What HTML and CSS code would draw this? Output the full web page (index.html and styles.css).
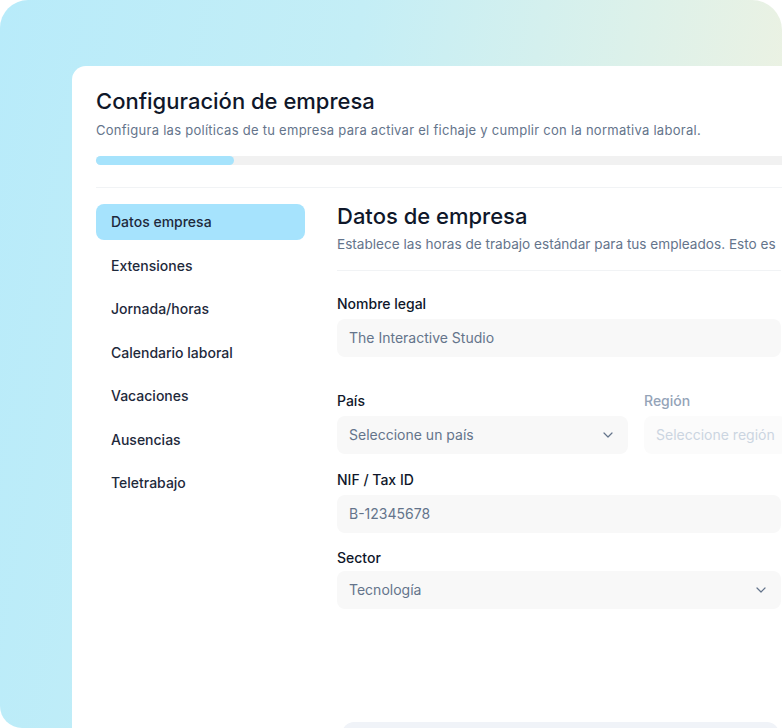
FILE: index.html
```html
<!DOCTYPE html>
<html lang="es">
<head>
  <meta charset="utf-8">
  <title>Configuración de empresa</title>
  <link rel="stylesheet" href="styles.css">
</head>
<body>
<div class="frame">
  <div class="card">
    <h1 class="title">Configuración de empresa</h1>
    <p class="lead">Configura las políticas de tu empresa para activar el fichaje y cumplir con la normativa laboral.</p>
    <div class="progress"><div class="progress-fill" style="width: 138px"></div></div>
    <hr class="rule">

    <div class="layout">
      <ul class="nav">
        <li class="nav-item active">Datos empresa</li>
        <li class="nav-item">Extensiones</li>
        <li class="nav-item">Jornada/horas</li>
        <li class="nav-item">Calendario laboral</li>
        <li class="nav-item">Vacaciones</li>
        <li class="nav-item">Ausencias</li>
        <li class="nav-item">Teletrabajo</li>
      </ul>

      <div class="content">
        <h2 class="section-title">Datos de empresa</h2>
        <p class="section-lead">Establece las horas de trabajo estándar para tus empleados. Esto es</p>
        <hr class="rule small">

        <div class="field">
          <label class="label">Nombre legal</label>
          <div class="input">The Interactive Studio</div>
        </div>

        <div class="row">
          <div class="field">
            <label class="label">País</label>
            <div class="input select">Seleccione un país
              <svg class="chev" width="10" height="6" viewBox="0 0 10 6"><path d="M1 1l4 4 4-4" fill="none" stroke="#64748b" stroke-width="1.2" stroke-linecap="round" stroke-linejoin="round"/></svg>
            </div>
          </div>
          <div class="field">
            <label class="label muted">Región</label>
            <div class="input disabled">Seleccione región</div>
          </div>
        </div>

        <div class="field">
          <label class="label">NIF / Tax ID</label>
          <div class="input">B-12345678</div>
        </div>

        <div class="field sector">
          <label class="label">Sector</label>
          <div class="input select">Tecnología
            <svg class="chev" width="10" height="6" viewBox="0 0 10 6"><path d="M1 1l4 4 4-4" fill="none" stroke="#64748b" stroke-width="1.2" stroke-linecap="round" stroke-linejoin="round"/></svg>
          </div>
        </div>

        <div class="footer-box"></div>
      </div>
    </div>
  </div>
</div>
</body>
</html>
```

FILE: styles.css
```css
html, body {
  margin: 0;
  padding: 0;
  background: #fff;
}
body {
  font-family: Inter, "Noto Sans", sans-serif;
  color: #0f172a;
}
.frame {
  width: 782px;
  height: 728px;
  overflow: hidden;
  border-radius: 28px 30px 0 22px;
  background: linear-gradient(100deg, #b8ebfa 0%, #c4eef6 40%, #dcf1ea 70%, #f5f2de 100%);
  padding: 66px 0 0 72px;
  box-sizing: border-box;
}
.card {
  width: 900px;
  min-height: 700px;
  background: #fff;
  border-radius: 14px 0 0 0;
  padding: 21px 24px 0 24px;
  box-sizing: border-box;
}
.title {
  font-size: 22px;
  line-height: 28px;
  font-weight: 500;
  margin: 0;
}
.lead {
  margin: 5px 0 0 0;
  font-size: 13px;
  line-height: 20px;
  letter-spacing: 0.27px;
  color: #64748b;
  white-space: nowrap;
}
.progress {
  margin-top: 16px;
  height: 9px;
  border-radius: 5px;
  background: #f1f1f1;
}
.progress-fill {
  height: 100%;
  border-radius: 5px;
  background: #a6e3fc;
}
.rule {
  border: 0;
  border-top: 1px solid #f1f3f5;
  margin: 22px 0 0 0;
}
.rule.small {
  margin-top: 16px;
}
.layout {
  display: flex;
  gap: 32px;
  margin-top: 16px;
}
.nav {
  list-style: none;
  margin: 0;
  padding: 0;
  width: 209px;
  flex-shrink: 0;
  display: flex;
  flex-direction: column;
  gap: 7.5px;
}
.nav-item {
  height: 36px;
  line-height: 35px;
  padding: 0 15px;
  font-size: 14px;
  font-weight: 500;
  color: #1e293b;
  border-radius: 8px;
}
.nav-item.active {
  background: #a6e3fd;
}
.content {
  width: 444px;
  flex-shrink: 0;
}
.section-title {
  margin: -1px 0 0 0;
  font-size: 22px;
  line-height: 26px;
  font-weight: 500;
}
.section-lead {
  margin: 5px 0 0 0;
  font-size: 13.6px;
  line-height: 20px;
  color: #64748b;
  white-space: nowrap;
}
.field {
  display: flex;
  flex-direction: column;
  margin-top: 16px;
}
.rule.small + .field {
  margin-top: 23px;
}
.field.sector {
  margin-top: 15px;
}
.field.sector .label {
  margin-bottom: 3px;
}
.label {
  font-size: 14px;
  line-height: 20px;
  font-weight: 500;
  color: #0f172a;
  margin-bottom: 5px;
}
.label.muted {
  color: #94a3b8;
}
.input {
  height: 38px;
  line-height: 38px;
  padding: 0 12px;
  border-radius: 8px;
  background: #f8f8f8;
  font-size: 14px;
  color: #64748b;
  white-space: nowrap;
  overflow: hidden;
}
.input.select {
  display: flex;
  justify-content: space-between;
  align-items: center;
  padding-right: 15px;
}
.input.disabled {
  background: #fbfbfb;
  color: #cbd5e1;
}
.row {
  display: grid;
  grid-template-columns: 291px 1fr;
  gap: 16px;
  margin-top: 18px;
}
.row .field {
  margin-top: 16px;
}
.footer-box {
  margin: 113px 2px 0 5px;
  height: 40px;
  border-radius: 12px 12px 0 0;
  background: #f0f3f8;
}
```
